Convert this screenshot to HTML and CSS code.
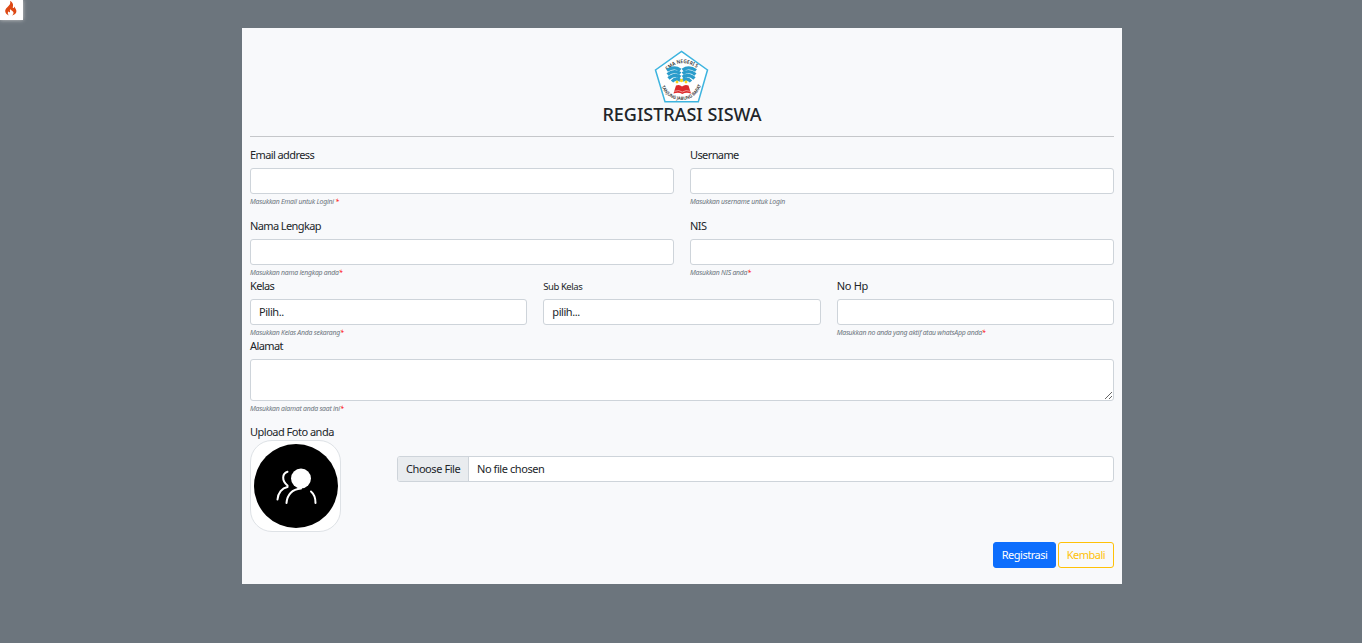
FILE: index.html
```html
<!DOCTYPE html>
<html lang="id">
<head>
<meta charset="utf-8">
<title>Registrasi Siswa</title>
<link rel="stylesheet" href="styles.css">
</head>
<body>
<div class="debug-icon">
  <svg width="12" height="15" viewBox="0 0 12 15"><path fill="#dd4814" d="M5 0C6 2.6 4.600 4 2.600 6C.5 8 0 9 .3 10.800C.6 12.500 2 13.800 4 14.400C2.600 13.200 2.400 11.600 3.500 10.300C3.700 11.200 4.200 11.500 4.800 11.300C5.500 10.700 4.300 9.500 5.300 8C5.500 9.400 8.700 10 8.500 12C8.400 13.200 7.800 13.900 7 14.400C10 13.600 11.500 12 11.400 9.900C11.300 8.100 10 7.200 9.500 5.500C9 6.300 9.100 7 8.300 7.100C7.100 7 8.400 5.200 8 3.500C7.600 1.800 6.600.6 5 0Z"/></svg>
</div>
<main class="card">
  <header class="head">
    <svg class="logo" width="56" height="54" viewBox="0 0 56 54">
      <path d="M27.500 1.300L53.500 20L44.300 51.700H11L1.500 20Z" fill="#fff" stroke="#3db4df" stroke-width="1.500"/>
      <defs>
        <path id="arc-top" d="M13.500 20.500Q27 7 43.500 18.500"/>
        <path id="arc-bottom" d="M7.500 36.500Q14 50 27.500 50T47.500 35"/>
      </defs>
      <text class="seal seal-top"><textPath href="#arc-top" textLength="32.500" lengthAdjust="spacingAndGlyphs">SMA NEGERI 5</textPath></text>
      <text class="seal seal-bottom"><textPath href="#arc-bottom" textLength="52" lengthAdjust="spacingAndGlyphs">TANJUNG JABUNG BARAT</textPath></text>
      <g fill="none" stroke="#2a9ccb" stroke-width="3.200">
        <path d="M26.500 20Q20 15.500 13 20.500M26.500 23.500Q20 19.500 13.500 24.500M26.500 27Q20 23 14.500 28.500M26.500 30.500Q22 27 18 31.500"/>
        <path d="M28.500 20Q35 15.500 42 20.500M28.500 23.500Q35 19.500 41.500 24.500M28.500 27Q35 23 40.500 28.500M28.500 30.500Q33 27 37 31.500"/>
      </g>
      <g fill="#fbd51d"><circle cx="23" cy="32" r="1.400"/><circle cx="27.500" cy="30.500" r="1.700"/><circle cx="32" cy="32" r="1.400"/></g>
      <path fill="#dc2a2a" d="M22 35.500Q25.500 34 28 36.500Q31 34 34.500 35.500L37 43.500Q32 42 28.300 44Q25 42 19.500 43.500Z"/>
      <path d="M20.300 41.300Q25 39.500 28.300 42Q32 39.500 36.300 41.300" fill="none" stroke="#fff" stroke-width=".5"/>
    </svg>
    <h1 class="title">REGISTRASI SISWA</h1>
  </header>
  <form class="form">
    <div class="row two">
      <div class="field"><label class="label">Email address</label><input class="control"><small class="hint">Masukkan Email untuk Logini <b class="req">*</b></small></div>
      <div class="field"><label class="label">Username</label><input class="control"><small class="hint">Masukkan username untuk Login</small></div>
    </div>
    <div class="row two names">
      <div class="field"><label class="label">Nama Lengkap</label><input class="control"><small class="hint">Masukkan nama lengkap anda<b class="req">*</b></small></div>
      <div class="field"><label class="label">NIS</label><input class="control"><small class="hint">Masukkan NIS anda<b class="req">*</b></small></div>
    </div>
    <div class="row three">
      <div class="field"><label class="label">Kelas</label><div class="control">Pilih..</div><small class="hint">Masukkan Kelas Anda sekarang<b class="req">*</b></small></div>
      <div class="field"><label class="label small">Sub Kelas</label><div class="control">pilih...</div></div>
      <div class="field"><label class="label loose">No Hp</label><input class="control"><small class="hint">Masukkan no anda yang aktif atau whatsApp anda<b class="req">*</b></small></div>
    </div>
    <div class="field"><label class="label">Alamat</label><textarea class="control area"></textarea><small class="hint">Masukkan alamat anda saat ini<b class="req">*</b></small></div>
    <div class="upload">
      <div class="photo">
        <label class="photo-label">Upload Foto anda</label>
        <div class="thumb">
          <svg width="84" height="84" viewBox="0 0 84 84">
            <circle cx="42" cy="42" r="42"/>
            <circle cx="47" cy="34.500" r="10" fill="#fff"/>
            <path d="M33.500 27.800C28 29.500 27.500 37 33.500 41.500L33.500 43C28 44 24 49 23.500 55.500M32.500 59C33 51 38 45 47 44.500M57 47.500C60 50 61.500 54 61.500 59" fill="none" stroke="#fff" stroke-width="2" stroke-linecap="round" stroke-linejoin="round"/>
          </svg>
        </div>
      </div>
      <div class="file"><span class="choose">Choose File</span><span class="chosen">No file chosen</span></div>
    </div>
    <div class="actions"><button type="button" class="btn primary">Registrasi</button><button type="button" class="btn warning">Kembali</button></div>
  </form>
</main>
</body>
</html>
```
FILE: styles.css
```css
* { box-sizing: border-box; }
body {
  margin: 0;
  height: 643px;
  overflow: hidden;
  background: #6c757d;
  color: #212529;
  font-family: "Noto Sans", "Open Sans", sans-serif;
  font-size: 11px;
  line-height: 16px;
}
.debug-icon {
  position: absolute;
  top: 0;
  left: 0;
  width: 23px;
  height: 20px;
  padding: 1px 0 0 5px;
  background: #fff;
  box-shadow: 0 0 4px #ccc;
}
.debug-icon svg { display: block; }
.card {
  width: 880px;
  height: 556px;
  margin: 28px 0 0 242px;
  padding: 22px 8px 0;
  background: #f8f9fb;
}
.head {
  display: flex;
  flex-direction: column;
  align-items: center;
  height: 87px;
  border-bottom: 1px solid #c5c7ca;
}
.logo { display: block; }
.seal { font-weight: 600; fill: #333; }
.seal-top { font-size: 5.2px; }
.seal-bottom { font-size: 4.6px; }
.title {
  margin: -1px 0 0;
  font-size: 18px;
  font-weight: 500;
  line-height: 22px;
  white-space: nowrap;
}
.form { padding-top: 10px; }
.row { display: grid; column-gap: 16px; align-items: start; }
.two { grid-template-columns: 1fr 1fr; height: 71px; }
.names { height: 60px; }
.three { grid-template-columns: repeat(3, 1fr); height: 60px; }
.field { display: flex; flex-direction: column; }
.label { height: 16px; margin-bottom: 5px; letter-spacing: -.6px; white-space: nowrap; }
.small { font-size: 9.500px; line-height: 18px; letter-spacing: -.45px; }
.loose { letter-spacing: -.3px; }
.control {
  display: block;
  width: 100%;
  height: 26px;
  padding: 4px 8px;
  border: 1px solid #ced4da;
  border-radius: 3px;
  background: #fff;
  letter-spacing: -.45px;
  line-height: 16px;
}
.area { height: 42px; resize: vertical; }
.hint {
  height: 13px;
  font-size: 6.900px;
  line-height: 15px;
  letter-spacing: -.24px;
  font-style: italic;
  color: #6c757d;
  white-space: nowrap;
}
.req { font-weight: 400; color: #f00; }
.upload { display: flex; justify-content: space-between; margin-top: 10px; }
.photo { width: 147px; }
.photo-label { display: block; height: 16px; letter-spacing: -.5px; }
.thumb {
  width: 91px;
  height: 92px;
  padding: 3px;
  border: 1px solid #dee2e6;
  border-radius: 22px;
  background: #fff;
}
.thumb svg { display: block; }
.file {
  display: flex;
  flex: 1;
  height: 26px;
  margin-top: 32px;
  border: 1px solid #ced4da;
  border-radius: 3px;
  background: #fff;
  overflow: hidden;
  line-height: 24px;
  letter-spacing: -.43px;
}
.choose { width: 71px; padding-left: 8px; background: #e9ecef; border-right: 1px solid #ced4da; white-space: nowrap; }
.chosen { padding-left: 8px; }
.actions { display: flex; justify-content: flex-end; gap: 2px; margin-top: 10px; }
.btn {
  height: 26px;
  padding: 0;
  border: 1px solid;
  border-radius: 3px;
  font: inherit;
  letter-spacing: -.5px;
}
.primary { width: 63px; background: #0d6efd; border-color: #0d6efd; color: #fff; }
.warning { width: 56px; background: transparent; border-color: #ffc107; color: #ffc107; }
```
